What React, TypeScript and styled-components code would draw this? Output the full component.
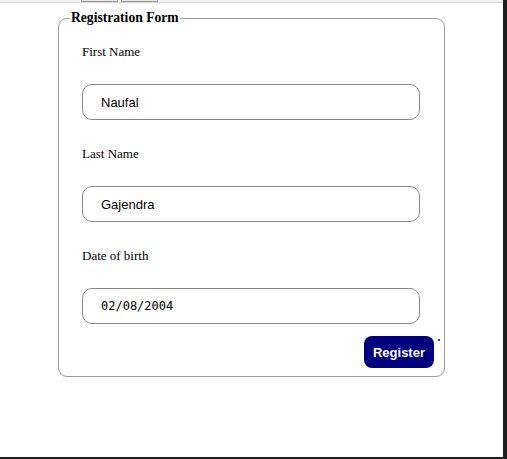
import React from "react";
import styled, { createGlobalStyle } from "styled-components";

const Global = createGlobalStyle`
  html, body { margin: 0; padding: 0; background: #ffffff; }
  #root { height: 459px; }
`;

const Screen = styled.div`
  display: grid;
  grid-template-columns: 503px 4px;
  grid-template-rows: 3px 454px 2px;
  width: 507px;
  height: 459px;
  overflow: hidden;
`;

const TopStrip = styled.div`
  grid-column: 1;
  grid-row: 1;
  background: #f3f3f3;
  border-bottom: 1px solid #d6d6d6;
  box-sizing: border-box;
  display: flex;
  gap: 3px;
  padding-left: 81px;
`;

const TabStub = styled.div`
  width: 37px;
  height: 2px;
  border: 1px solid #9a9a9a;
  border-top: none;
  box-sizing: border-box;
  background: #e6e6e6;
`;

const SideDark = styled.div`
  grid-column: 2;
  grid-row: 1 / span 3;
  background: #1f1f1f;
`;

const BottomDark = styled.div`
  grid-column: 1;
  grid-row: 3;
  background: #1f1f1f;
`;

const Page = styled.main`
  grid-column: 1;
  grid-row: 2;
  background: #ffffff;
  padding-top: 7px;
  box-sizing: border-box;
`;

const FormBox = styled.fieldset`
  width: 387px;
  box-sizing: border-box;
  margin: 0 auto;
  border: 1px solid #9c9c9c;
  border-radius: 9px;
  padding: 0 10px 8px 10px;
  min-inline-size: 0;
`;

const Legend = styled.legend`
  font-family: "Liberation Serif", "Times New Roman", serif;
  font-weight: bold;
  font-size: 13.6px;
  line-height: 16px;
  color: #000;
  padding: 0 1px;
  margin-left: 1px;
`;

const Fields = styled.div`
  display: flex;
  flex-direction: column;
  padding: 18px 0 0 13px;
`;

const Label = styled.label`
  display: block;
  font-family: "Liberation Serif", "Times New Roman", serif;
  font-size: 13px;
  line-height: 15px;
  color: #000;
  margin-bottom: 25px;
`;

const Input = styled.input<{ $mono?: boolean }>`
  width: 338px;
  height: 36px;
  box-sizing: border-box;
  border: 1px solid #8a8a8a;
  border-radius: 10px;
  padding: 0 0 0 18px;
  margin: 0 0 26px 0;
  font-family: ${(p) =>
    p.$mono ? '"DejaVu Sans Mono", "Liberation Mono", monospace' : '"Liberation Sans", Arial, sans-serif'};
  font-size: ${(p) => (p.$mono ? "12px" : "13px")};
  color: #000;
  background: #fff;
  outline: none;
`;

const LastInput = styled(Input)`
  margin-bottom: 12px;
`;

const Actions = styled.div`
  display: flex;
  justify-content: flex-end;
  position: relative;
`;

const RegisterButton = styled.button`
  height: 32px;
  padding: 0 9px;
  border: none;
  border-radius: 8px;
  background: #00007f;
  color: #fff;
  font-family: "Liberation Sans", Arial, sans-serif;
  font-weight: bold;
  font-size: 13px;
  cursor: pointer;
`;

const Dot = styled.span`
  position: absolute;
  right: -6px;
  top: 3px;
  width: 2px;
  height: 2px;
  background: #3b3bd8;
`;

export default function App() {
  return (
    <>
      <Global />
      <Screen>
        <TopStrip>
          <TabStub />
          <TabStub />
        </TopStrip>
        <Page>
          <FormBox>
            <Legend>Registration Form</Legend>
            <Fields>
              <Label htmlFor="first">First Name</Label>
              <Input id="first" defaultValue="Naufal" />
              <Label htmlFor="last">Last Name</Label>
              <Input id="last" defaultValue="Gajendra" />
              <Label htmlFor="dob">Date of birth</Label>
              <LastInput id="dob" $mono defaultValue="02/08/2004" />
            </Fields>
            <Actions>
              <RegisterButton type="button">Register</RegisterButton>
              <Dot />
            </Actions>
          </FormBox>
        </Page>
        <SideDark />
        <BottomDark />
      </Screen>
    </>
  );
}
